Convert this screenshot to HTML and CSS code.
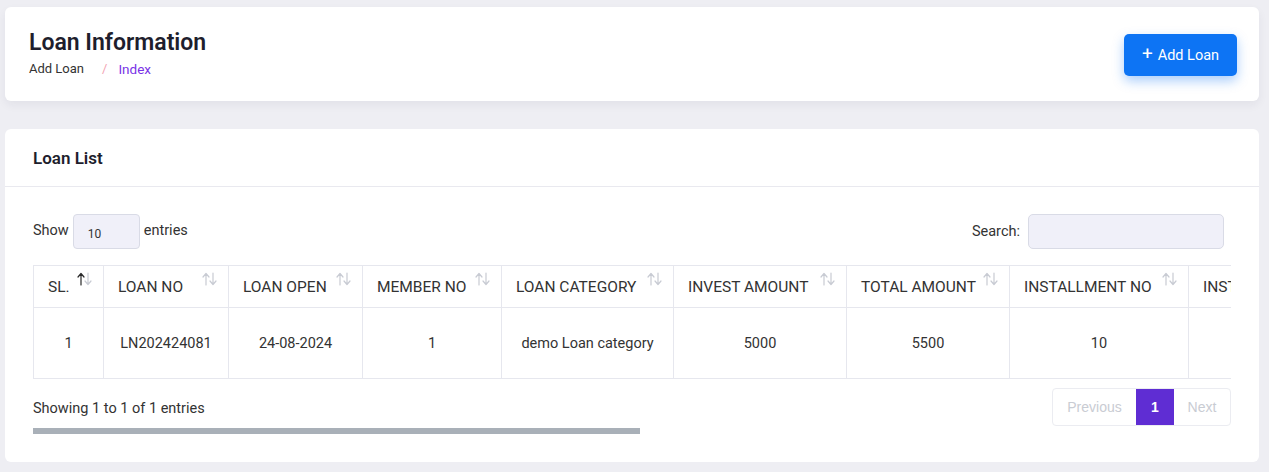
FILE: index.html
```html
<!DOCTYPE html>
<html>
<head>
<meta charset="utf-8">
<link rel="stylesheet" href="styles.css">
</head>
<body>
<div class="page">
  <div class="card head-card">
    <div class="head-left">
      <h1 class="title">Loan Information</h1>
      <div class="crumbs">
        <span class="crumb">Add Loan</span>
        <span class="sep">/</span>
        <span class="crumb active">Index</span>
      </div>
    </div>
    <button class="btn-add"><span class="plus">+</span> Add Loan</button>
  </div>

  <div class="card list-card">
    <div class="list-header">Loan List</div>
    <div class="list-body">
      <div class="controls">
        <label class="len">Show <span class="select">10</span> entries</label>
        <label class="search">Search: <span class="search-input"></span></label>
      </div>
      <div class="table-wrap">
        <table class="tbl">
          <colgroup>
            <col class="w1"><col class="w2"><col class="w3"><col class="w4"><col class="w5"><col class="w6"><col class="w7"><col class="w8"><col class="w9">
          </colgroup>
          <thead>
            <tr>
              <th><div class="th"><span>SL.</span><svg class="sort active" viewBox="0 0 15 14" width="15" height="14"><path class="up" d="M4 13V2M1 5l3-3.5L7 5"/><path class="dn" d="M11 1v11M8 9l3 3.5L14 9"/></svg></div></th>
              <th><div class="th"><span>LOAN NO</span><svg class="sort" viewBox="0 0 15 14" width="15" height="14"><path class="up" d="M4 13V2M1 5l3-3.5L7 5"/><path class="dn" d="M11 1v11M8 9l3 3.5L14 9"/></svg></div></th>
              <th><div class="th"><span>LOAN OPEN</span><svg class="sort" viewBox="0 0 15 14" width="15" height="14"><path class="up" d="M4 13V2M1 5l3-3.5L7 5"/><path class="dn" d="M11 1v11M8 9l3 3.5L14 9"/></svg></div></th>
              <th><div class="th"><span>MEMBER NO</span><svg class="sort" viewBox="0 0 15 14" width="15" height="14"><path class="up" d="M4 13V2M1 5l3-3.5L7 5"/><path class="dn" d="M11 1v11M8 9l3 3.5L14 9"/></svg></div></th>
              <th><div class="th"><span>LOAN CATEGORY</span><svg class="sort" viewBox="0 0 15 14" width="15" height="14"><path class="up" d="M4 13V2M1 5l3-3.5L7 5"/><path class="dn" d="M11 1v11M8 9l3 3.5L14 9"/></svg></div></th>
              <th><div class="th"><span>INVEST AMOUNT</span><svg class="sort" viewBox="0 0 15 14" width="15" height="14"><path class="up" d="M4 13V2M1 5l3-3.5L7 5"/><path class="dn" d="M11 1v11M8 9l3 3.5L14 9"/></svg></div></th>
              <th><div class="th"><span>TOTAL AMOUNT</span><svg class="sort" viewBox="0 0 15 14" width="15" height="14"><path class="up" d="M4 13V2M1 5l3-3.5L7 5"/><path class="dn" d="M11 1v11M8 9l3 3.5L14 9"/></svg></div></th>
              <th><div class="th"><span>INSTALLMENT NO</span><svg class="sort" viewBox="0 0 15 14" width="15" height="14"><path class="up" d="M4 13V2M1 5l3-3.5L7 5"/><path class="dn" d="M11 1v11M8 9l3 3.5L14 9"/></svg></div></th>
              <th><div class="th"><span>INSTALLMENT AMOUNT</span><svg class="sort" viewBox="0 0 15 14" width="15" height="14"><path class="up" d="M4 13V2M1 5l3-3.5L7 5"/><path class="dn" d="M11 1v11M8 9l3 3.5L14 9"/></svg></div></th>
            </tr>
          </thead>
          <tbody>
            <tr>
              <td>1</td>
              <td>LN202424081</td>
              <td>24-08-2024</td>
              <td>1</td>
              <td>demo Loan category</td>
              <td>5000</td>
              <td>5500</td>
              <td>10</td>
              <td>550</td>
            </tr>
          </tbody>
        </table>
      </div>
      <div class="footer">
        <div class="foot-left">
          <div class="info">Showing 1 to 1 of 1 entries</div>
          <div class="scrollbar"></div>
        </div>
        <div class="pager">
          <span class="pg disabled">Previous</span>
          <span class="pg current">1</span>
          <span class="pg disabled">Next</span>
        </div>
      </div>
    </div>
  </div>
</div>
</body>
</html>
```
FILE: styles.css
```css
* { box-sizing: border-box; }
html, body { margin: 0; padding: 0; }
body {
  background: #eeeef3;
  font-family: Roboto, "Noto Sans", sans-serif;
  color: #333;
  width: 1269px;
  height: 472px;
  overflow: hidden;
}
.page {
  padding: 7px 10px 0 5px;
  display: flex;
  flex-direction: column;
  gap: 28px;
}
.card {
  background: #fff;
  border-radius: 6px;
}
.head-card {
  height: 94px;
  display: flex;
  align-items: center;
  justify-content: space-between;
  padding: 0 22px 0 24px;
  box-shadow: 0 4px 10px rgba(30, 30, 60, 0.06);
}
.head-left { display: flex; flex-direction: column; gap: 4px; margin-top: -2px; }
.title {
  margin: 0;
  font-size: 23px;
  font-weight: 600;
  color: #1e1e2d;
  line-height: 28px;
}
.crumbs { font-size: 13px; color: #333; display: flex; }
.crumb.active { color: #7a33e6; font-size: 13.5px; }
.sep { color: #f3a3b3; margin: 0 11px 0 18px; }
.btn-add {
  font-family: inherit;
  background: #0d74f4;
  color: #fff;
  border: 0;
  border-radius: 5px;
  height: 42px;
  width: 113px;
  font-size: 14.5px;
  display: flex;
  align-items: center;
  justify-content: center;
  gap: 5px;
  box-shadow: 0 5px 12px rgba(13, 116, 244, 0.35);
  margin-top: 2px;
}
.plus { font-size: 19px; line-height: 1; margin-top: -3px; }
.list-card {
  height: 333px;
}
.list-header {
  height: 58px;
  border-bottom: 1px solid #e9e9ef;
  padding: 0 28px;
  display: flex;
  align-items: center;
  font-size: 17px;
  font-weight: 600;
  color: #1e1e2d;
}
.list-body { padding: 27px 28px 0 28px; }
.controls {
  display: flex;
  justify-content: space-between;
  align-items: center;
  font-size: 14.5px;
  color: #333;
}
.len, .search { display: flex; align-items: center; gap: 4px; }
.len { margin-top: -3px; }
.select {
  width: 67px;
  height: 35px;
  border: 1px solid #d9dbe6;
  border-radius: 4px;
  background: #f0f0f9;
  font-size: 12px;
  display: flex;
  align-items: center;
  padding-left: 14px;
  padding-top: 5px;
  margin-top: 3px;
}
.search { gap: 8px; margin-right: 7px; }
.search-input {
  width: 196px;
  height: 35px;
  border: 1px solid #d9dbe6;
  border-radius: 5px;
  background: #f0f0f9;
}
.table-wrap {
  margin-top: 16px;
  overflow: hidden;
  width: 1198px;
}
.tbl {
  border-collapse: collapse;
  table-layout: fixed;
  width: 1360px;
  font-size: 14.5px;
}
.w1 { width: 70px; }
.w2 { width: 125px; }
.w3 { width: 134px; }
.w4 { width: 139px; }
.w5 { width: 172px; }
.w6 { width: 173px; }
.w7 { width: 163px; }
.w8 { width: 179px; }
.w9 { width: 205px; }
.tbl th, .tbl td {
  border: 1px solid #e6e7ee;
  color: #333;
}
.tbl th {
  height: 42px;
  font-weight: 400;
  font-size: 15.5px;
  text-align: left;
  padding: 0 11px 0 14px;
  white-space: nowrap;
  overflow: hidden;
}
.th {
  display: flex;
  justify-content: space-between;
  align-items: center;
}
.sort {
  flex: none;
  align-self: flex-start;
  margin-top: -6px;
  fill: none;
  stroke-width: 1.2;
  stroke-linecap: round;
  stroke-linejoin: round;
}
.sort path { stroke: #c8cbd3; }
.sort.active .up { stroke: #2a2a2a; }
.tbl td {
  height: 71px;
  text-align: center;
  vertical-align: middle;
}
.footer {
  display: flex;
  justify-content: space-between;
  align-items: flex-start;
  margin-top: 9px;
}
.foot-left { padding-top: 12px; }
.info { font-size: 14.5px; color: #333; }
.scrollbar {
  margin-top: 11px;
  width: 607px;
  height: 6px;
  background: #a9b0b8;
}
.pager {
  display: flex;
  border: 1px solid #ebecf1;
  border-radius: 4px;
  height: 38px;
  font-family: "Liberation Sans", Arial, sans-serif;
  font-size: 14px;
  overflow: hidden;
}
.pg {
  display: flex;
  align-items: center;
  justify-content: center;
  color: #c9ccd3;
}
.pg.disabled:first-child { width: 83px; }
.pg.disabled:last-child { width: 56px; }
.pg.current {
  width: 38px;
  background: #5f2dd3;
  color: #fff;
  font-weight: 700;
}
```
